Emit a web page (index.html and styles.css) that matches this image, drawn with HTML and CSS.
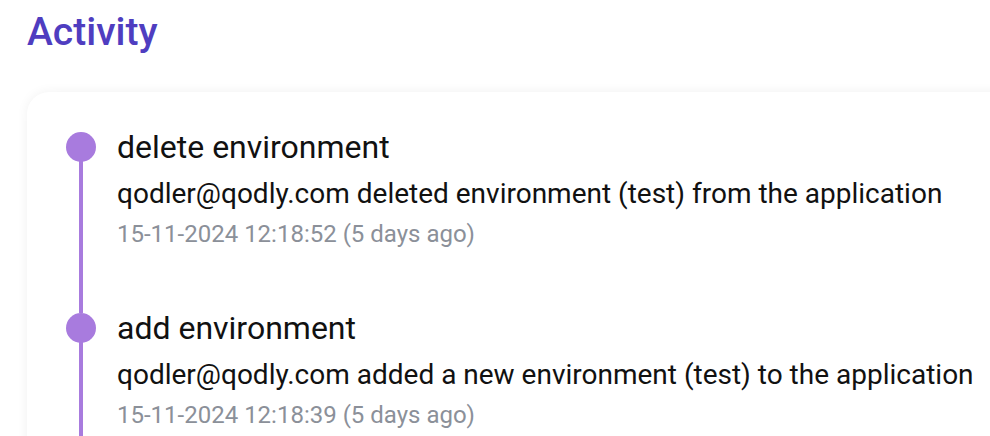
FILE: index.html
```html
<!DOCTYPE html>
<html>
<head>
<meta charset="utf-8">
<link rel="stylesheet" href="styles.css">
</head>
<body>
<div class="page">
  <h1 class="heading">Activity</h1>
  <div class="card">
    <ul class="timeline">
      <li class="item">
        <div class="rail"><span class="dot"></span><span class="line"></span></div>
        <div class="content">
          <div class="title">delete environment</div>
          <div class="desc">qodler@qodly.com deleted environment (test) from the application</div>
          <div class="date">15-11-2024 12:18:52 (5 days ago)</div>
        </div>
      </li>
      <li class="item">
        <div class="rail"><span class="dot"></span><span class="line"></span></div>
        <div class="content">
          <div class="title">add environment</div>
          <div class="desc">qodler@qodly.com added a new environment (test) to the application</div>
          <div class="date">15-11-2024 12:18:39 (5 days ago)</div>
        </div>
      </li>
    </ul>
  </div>
</div>
</body>
</html>
```
FILE: styles.css
```css
html, body {
  margin: 0;
  padding: 0;
  background: #ffffff;
  overflow: hidden;
}
.page {
  padding: 8px 0 0 27px;
  font-family: Roboto, "Liberation Sans", sans-serif;
}
.heading {
  margin: 0;
  font-size: 39px;
  font-weight: 500;
  color: #4f3dc0;
  line-height: 48px;
}
.card {
  margin-top: 36px;
  width: 1100px;
  height: 500px;
  background: #fff;
  border-radius: 22px;
  box-shadow: 0 0 12px rgba(0,0,0,0.06);
  padding: 40px 0 0 39px;
  box-sizing: border-box;
}
.timeline {
  list-style: none;
  margin: 0;
  padding: 0;
}
.item {
  display: flex;
  gap: 21px;
}
.rail {
  width: 30px;
  display: flex;
  flex-direction: column;
  align-items: center;
}
.dot {
  width: 30px;
  height: 30px;
  border-radius: 50%;
  background: #a87bde;
  flex: none;
}
.line {
  width: 4px;
  flex: 1;
  background: #a87bde;
  margin-top: -2px;
}
.content {
  padding-bottom: 64px;
}
.title {
  font-size: 32px;
  color: #111;
  line-height: 30px;
}
.desc {
  margin-top: 14px;
  font-size: 28px;
  color: #111;
  line-height: 36px;
}
.date {
  margin-top: 7px;
  font-size: 24px;
  color: #8b9099;
  line-height: 30px;
}
```
